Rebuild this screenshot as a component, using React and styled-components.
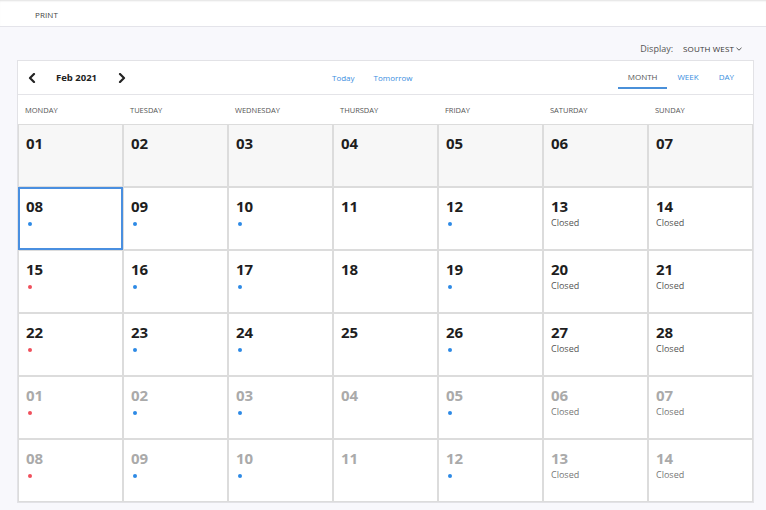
import styled, { createGlobalStyle } from "styled-components";

const GlobalStyle = createGlobalStyle`
  * { box-sizing: border-box; }
  body {
    margin: 0;
    background: #f8f8fc;
    font-family: "Open Sans", "Liberation Sans", sans-serif;
    color: #333;
  }
`;

const weekdays = ["MONDAY", "TUESDAY", "WEDNESDAY", "THURSDAY", "FRIDAY", "SATURDAY", "SUNDAY"];

// dot: "b" blue, "r" red, "" none; third item = closed
const weeks = [
  { past: true, days: ["01", "02", "03", "04", "05", "06", "07"].map((n) => ({ n, dot: "" })) },
  { days: [["08", "b"], ["09", "b"], ["10", "b"], ["11", ""], ["12", "b"], ["13", "", 1], ["14", "", 1]] },
  { days: [["15", "r"], ["16", "b"], ["17", "b"], ["18", ""], ["19", "b"], ["20", "", 1], ["21", "", 1]] },
  { days: [["22", "r"], ["23", "b"], ["24", "b"], ["25", ""], ["26", "b"], ["27", "", 1], ["28", "", 1]] },
  { muted: true, days: [["01", "r"], ["02", "b"], ["03", "b"], ["04", ""], ["05", "b"], ["06", "", 1], ["07", "", 1]] },
  { muted: true, days: [["08", "r"], ["09", "b"], ["10", "b"], ["11", ""], ["12", "b"], ["13", "", 1], ["14", "", 1]] },
].map((w) => ({
  ...w,
  days: w.days.map((d) => (Array.isArray(d) ? { n: d[0], dot: d[1], closed: !!d[2] } : d)),
}));

const Chevron = ({ dir }) => (
  <svg width="8" height="10" viewBox="0 0 8 10">
    <polyline
      points={dir === "left" ? "6,1 2,5 6,9" : "2,1 6,5 2,9"}
      fill="none"
      stroke="#222"
      strokeWidth="2.2"
      strokeLinecap="round"
      strokeLinejoin="round"
    />
  </svg>
);

const App = () => {
  return (
    <>
      <GlobalStyle />
      <TopBar>
        <TopLink>PRINT</TopLink>
      </TopBar>
      <Main>
        <DisplayRow>
          <DisplayLabel>Display:</DisplayLabel>
          <DisplaySelect>
            SOUTH WEST
            <svg width="6" height="4" viewBox="0 0 6 4">
              <polyline points="0.5,0.8 3,3.2 5.5,0.8" fill="none" stroke="#444" strokeWidth="0.9" />
            </svg>
          </DisplaySelect>
        </DisplayRow>
        <Card>
          <Toolbar>
            <NavGroup>
              <NavButton>
                <Chevron dir="left" />
              </NavButton>
              <MonthTitle>Feb 2021</MonthTitle>
              <NavButton>
                <Chevron dir="right" />
              </NavButton>
            </NavGroup>
            <QuickLinks>
              <QuickLink>Today</QuickLink>
              <QuickLink>Tomorrow</QuickLink>
            </QuickLinks>
            <Tabs>
              <Tab $active>MONTH</Tab>
              <Tab>WEEK</Tab>
              <Tab>DAY</Tab>
            </Tabs>
          </Toolbar>
          <HeaderRow>
            {weekdays.map((d) => (
              <HeaderCell key={d}>{d}</HeaderCell>
            ))}
          </HeaderRow>
          <Grid>
            {weeks.map((w, wi) =>
              w.days.map((d, di) => (
                <DayCell key={`${wi}-${di}`} $past={w.past} $selected={wi === 1 && di === 0}>
                  <DayNumber $muted={w.muted}>{d.n}</DayNumber>
                  {d.dot && <Dot $color={d.dot === "r" ? "#f0505c" : "#2d8ae5"} />}
                  {d.closed && <ClosedText $muted={w.muted}>Closed</ClosedText>}
                </DayCell>
              ))
            )}
          </Grid>
        </Card>
      </Main>
    </>
  );
};

const TopBar = styled.div`
  height: 27px;
  background: #fff;
  border-bottom: 1px solid #e4e4ea;
  box-shadow: inset 0 2px 2px -1px rgba(0, 0, 0, 0.12);
  display: flex;
  align-items: center;
  padding: 2px 0 0 35px;
`;

const TopLink = styled.span`
  font-size: 8px;
  color: #444;
  letter-spacing: 0.1px;
`;

const Main = styled.div`
  padding: 0 12px 0 17px;
`;

const DisplayRow = styled.div`
  height: 33px;
  display: flex;
  align-items: center;
  justify-content: flex-end;
  padding: 10px 12px 0 0;
  gap: 10px;
`;

const DisplayLabel = styled.span`
  font-size: 9px;
  color: #555;
`;

const DisplaySelect = styled.span`
  display: flex;
  align-items: center;
  gap: 2px;
  font-size: 8px;
  letter-spacing: 0.15px;
  color: #333;
`;

const Card = styled.div`
  width: 737px;
  background: #fff;
  border: 1px solid #e2e2e6;
`;

const Toolbar = styled.div`
  height: 34px;
  border-bottom: 1px solid #e4e4e8;
  display: flex;
  align-items: center;
`;

const NavGroup = styled.div`
  width: 305px;
  display: flex;
  align-items: center;
  padding-left: 10px;
`;

const NavButton = styled.span`
  display: flex;
  align-items: center;
  width: 8px;
`;

const MonthTitle = styled.span`
  font-size: 9.5px;
  font-weight: 700;
  color: #222;
  width: 82px;
  padding-left: 20px;
`;

const QuickLinks = styled.div`
  display: flex;
  align-items: center;
  gap: 19px;
  padding-left: 9px;
`;

const QuickLink = styled.span`
  font-size: 8px;
  color: #3b8ee0;
`;

const Tabs = styled.div`
  margin-left: auto;
  margin-right: 9px;
  display: flex;
  align-items: center;
`;

const Tab = styled.span`
  height: 22px;
  line-height: 20px;
  padding: 0 10px;
  font-size: 8px;
  color: ${({ $active }) => ($active ? "#555" : "#3b8ee0")};
  border-bottom: 2px solid ${({ $active }) => ($active ? "#4a90d9" : "transparent")};
`;

const HeaderRow = styled.div`
  height: 29px;
  display: grid;
  grid-template-columns: repeat(7, 105px);
  align-items: center;
`;

const HeaderCell = styled.span`
  font-size: 7.5px;
  color: #555;
  padding-left: 7px;
`;

const Grid = styled.div`
  display: grid;
  grid-template-columns: repeat(7, 105px);
  grid-auto-rows: 63px;
`;

const DayCell = styled.div`
  border: 1px solid ${({ $selected }) => ($selected ? "#4a8fe0" : "#dcdcdc")};
  box-shadow: ${({ $selected }) => ($selected ? "inset 0 0 0 1px #4a8fe0" : "none")};
  background: ${({ $past }) => ($past ? "#f7f7f7" : "#fff")};
  padding: 9px 7px 0;
  display: flex;
  flex-direction: column;
  align-items: flex-start;
`;

const DayNumber = styled.span`
  font-size: 15px;
  line-height: 18px;
  font-weight: 700;
  color: ${({ $muted }) => ($muted ? "#aaaaaa" : "#1e1e1e")};
`;

const Dot = styled.span`
  width: 4px;
  height: 4px;
  border-radius: 50%;
  margin: 7px 0 0 2px;
  background: ${({ $color }) => $color};
`;

const ClosedText = styled.span`
  font-size: 9px;
  line-height: 12px;
  margin-top: 2px;
  color: ${({ $muted }) => ($muted ? "#777" : "#555")};
`;

export default App;
